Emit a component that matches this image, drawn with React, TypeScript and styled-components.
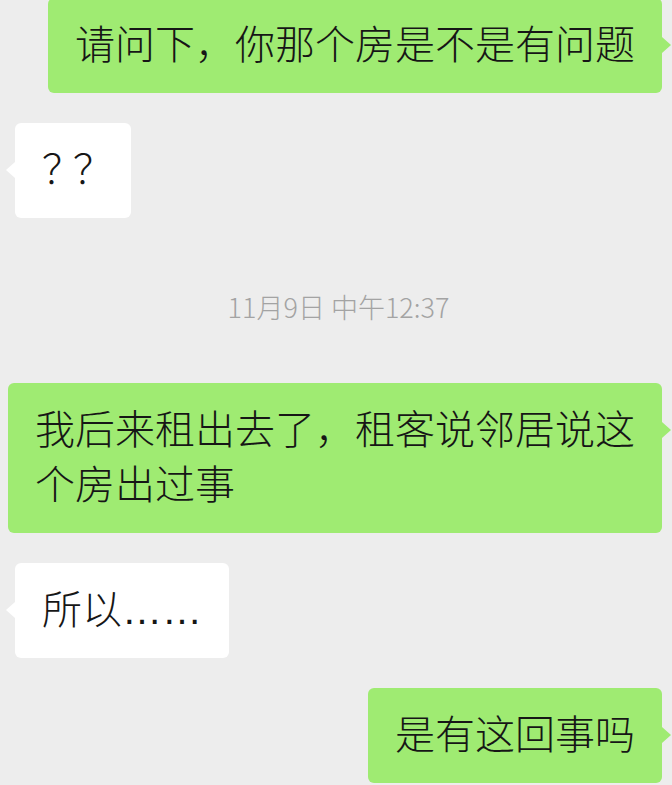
import styled, { createGlobalStyle, css } from 'styled-components';

type Side = 'me' | 'them';

interface IMessage {
  id: number;
  side: Side;
  lines: string[];
  narrow?: boolean;
}

type Item = IMessage | { id: number; time: string };

const items: Item[] = [
  { id: 1, side: 'me', lines: ['请问下，你那个房是不是有问题'] },
  { id: 2, side: 'them', lines: ['？？'], narrow: true },
  { id: 3, time: '11月9日 中午12:37' },
  {
    id: 4,
    side: 'me',
    lines: ['我后来租出去了，租客说邻居说这', '个房出过事'],
  },
  { id: 5, side: 'them', lines: ['所以……'] },
  { id: 6, side: 'me', lines: ['是有这回事吗'] },
];

const GlobalStyle = createGlobalStyle`
  html, body {
    margin: 0;
    padding: 0;
    background: #ededed;
    overflow: hidden;
  }
  body {
    font-family: "Noto Sans CJK SC", "Noto Sans", sans-serif;
  }
`;

const App = () => (
  <>
    <GlobalStyle />
    <Chat>
      {items.map((item) =>
        'time' in item ? (
          <TimeStamp key={item.id}>{item.time}</TimeStamp>
        ) : (
          <Row key={item.id} $side={item.side}>
            <Bubble $side={item.side} $narrow={item.narrow}>
              {item.lines.map((line) => (
                <Line key={line}>{line}</Line>
              ))}
            </Bubble>
          </Row>
        )
      )}
    </Chat>
  </>
);

const Chat = styled.div`
  display: flex;
  flex-direction: column;
  gap: 30px;
  margin-top: -2px;
  padding: 0 10px 0 15px;
`;

const Row = styled.div<{ $side: Side }>`
  display: flex;
  justify-content: ${(p) => (p.$side === 'me' ? 'flex-end' : 'flex-start')};
`;

const Bubble = styled.div<{ $side: Side; $narrow?: boolean }>`
  position: relative;
  padding: 20px 27px;
  border-radius: 6px;
  font-family: "Liberation Sans", "Noto Sans CJK SC", sans-serif;
  font-size: 40px;
  font-weight: 300;
  line-height: 55px;
  letter-spacing: ${(p) => (p.$narrow ? '-9px' : '0')};
  color: #161616;
  white-space: nowrap;
  background: ${(p) => (p.$side === 'me' ? '#9feb72' : '#ffffff')};

  &::after {
    content: '';
    position: absolute;
    top: 39px;
    width: 0;
    height: 0;
    border-top: 8px solid transparent;
    border-bottom: 8px solid transparent;
    ${(p) =>
      p.$side === 'me'
        ? css`
            right: -9px;
            border-left: 9px solid #9feb72;
          `
        : css`
            left: -9px;
            border-right: 9px solid #ffffff;
          `}
  }
`;

const Line = styled.div`
  display: block;
`;

const TimeStamp = styled.div`
  padding: 45px 0 32px;
  text-align: center;
  font-size: 27px;
  font-weight: 300;
  line-height: 28px;
  color: #a3a3a3;
`;

export default App;
